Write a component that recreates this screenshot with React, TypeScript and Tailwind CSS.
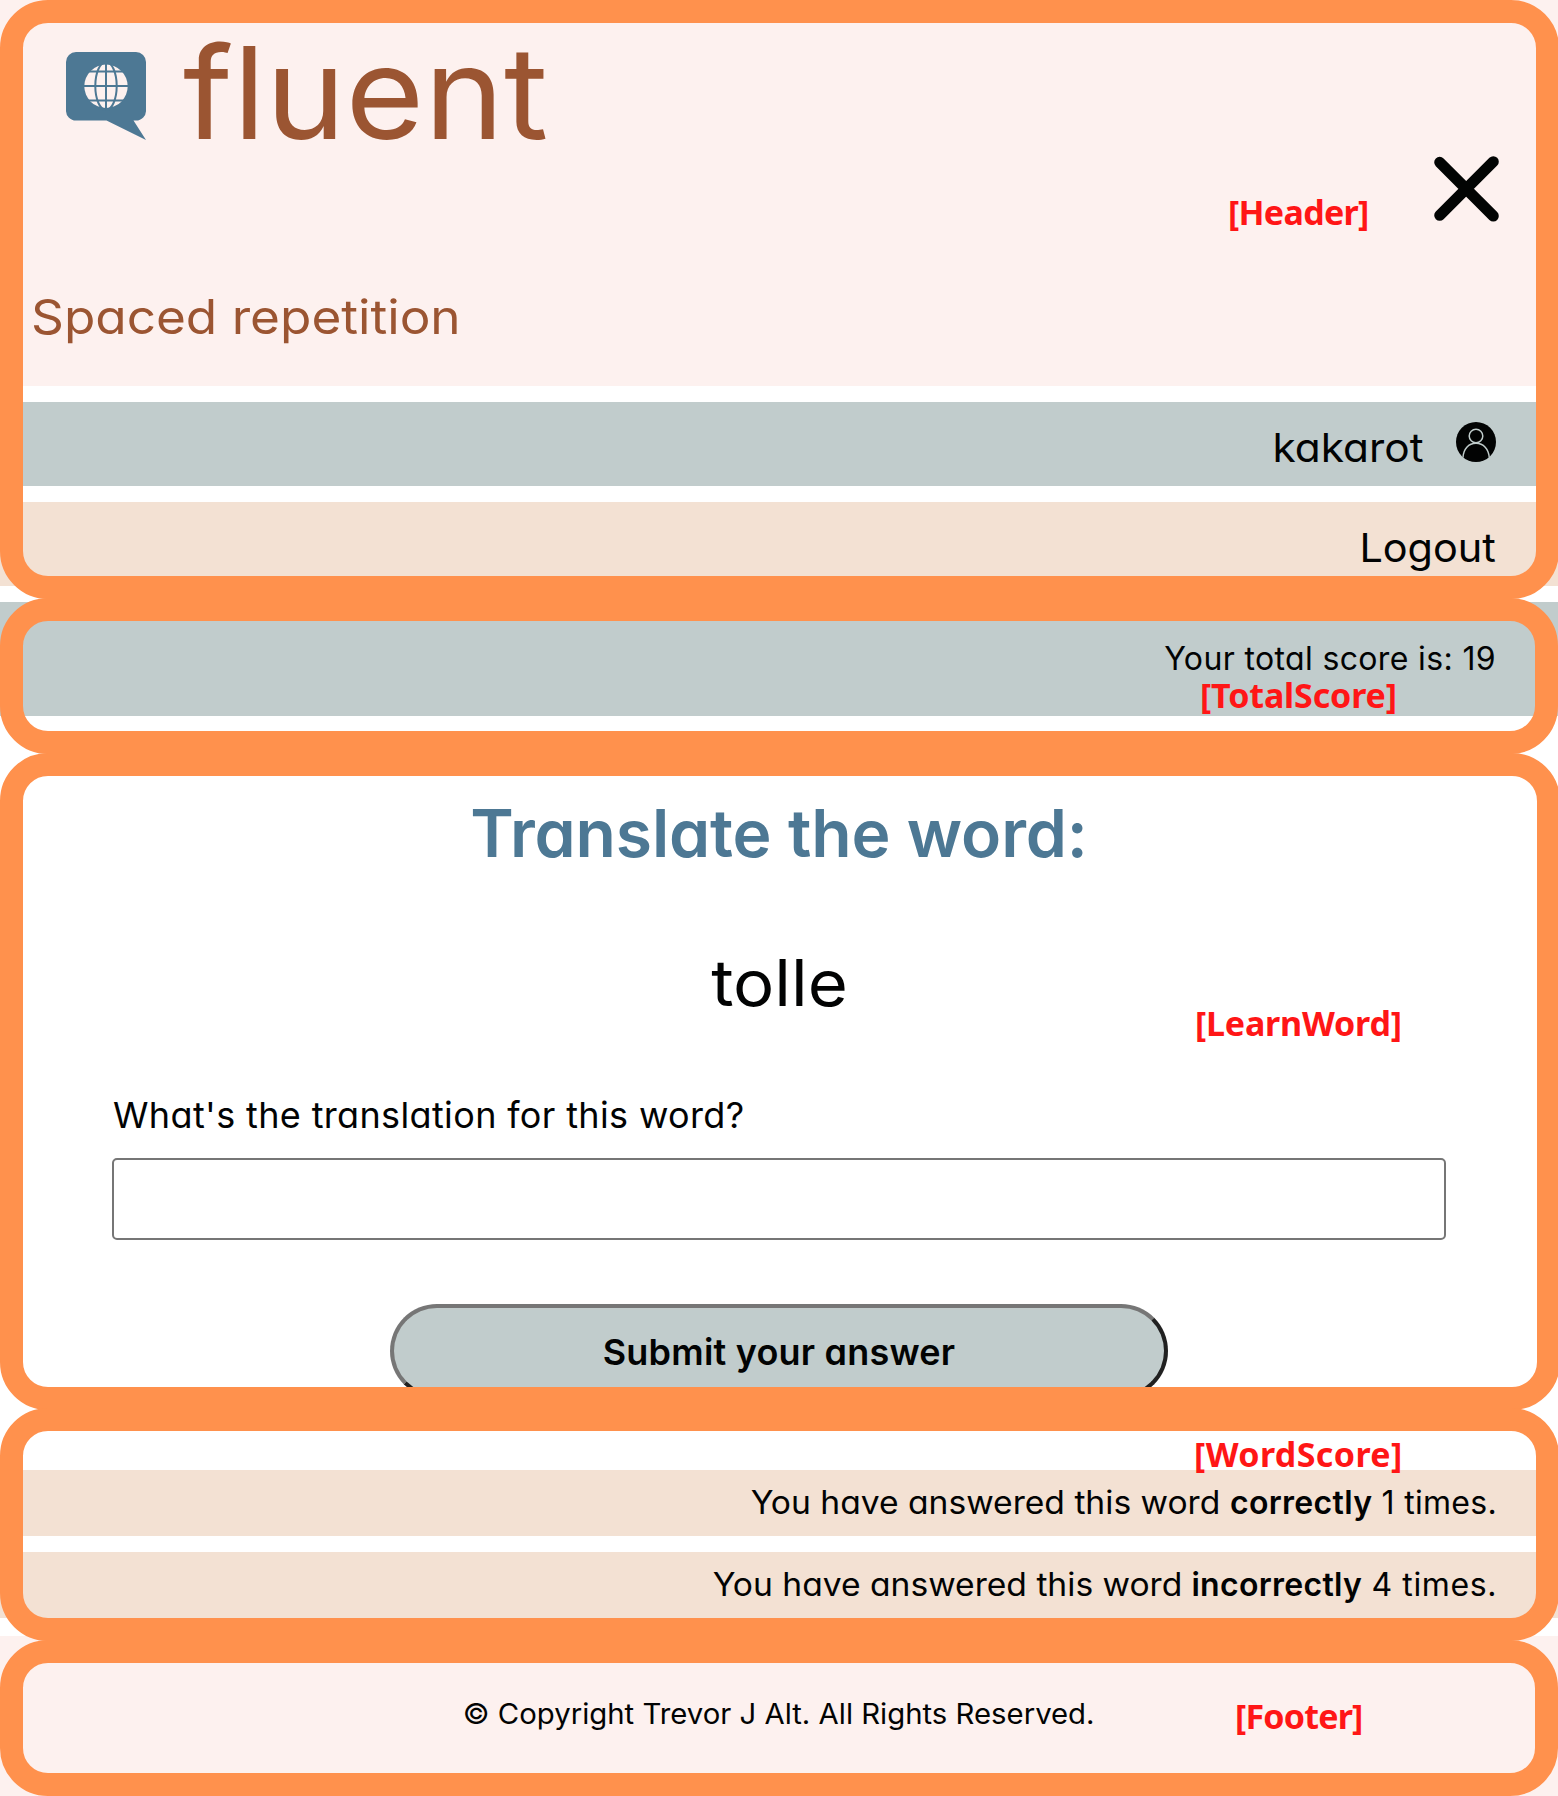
const labelBase =
  "absolute whitespace-nowrap font-['Noto_Sans',sans-serif] text-[34px] leading-[34px] font-bold text-[#ff1616]";

function Logo() {
  return (
    <svg width="80" height="88" viewBox="0 0 80 88" className="mt-[23px] shrink-0">
      <path
        d="M10 0H70A10 10 0 0 1 80 10V58A10 10 0 0 1 70 68.5H67.5L80 88L40.5 68.5H10A10 10 0 0 1 0 58V10A10 10 0 0 1 10 0Z"
        fill="#4d7894"
      />
      <circle cx="40" cy="34.3" r="21.7" fill="#fdf1ef" />
      <g fill="none" stroke="#4d7894" strokeWidth="2">
        <path d="M40 11V57M17 34H63M21 19.5H59M21 48.5H59" />
        <ellipse cx="40" cy="34" rx="10.7" ry="24" />
      </g>
    </svg>
  );
}

function CloseIcon() {
  return (
    <svg width="66" height="66" viewBox="0 0 66 66">
      <path d="M5.7 6.3L59.3 60M59.3 5.7L5.7 59.3" stroke="#020403" strokeWidth="11" strokeLinecap="round" />
    </svg>
  );
}

function Avatar() {
  return (
    <svg width="40" height="40" viewBox="0 0 40 40" className="mt-5 shrink-0">
      <circle cx="20" cy="20" r="20" fill="#020303" />
      <g fill="none" stroke="#c0cccb" strokeWidth="1.5">
        <circle cx="20" cy="14" r="6.8" />
        <path d="M7 35.5C7.4 27 12.5 21.3 20 21.3S32.6 27 33.3 35.5" />
      </g>
    </svg>
  );
}

function Header() {
  return (
    <header className="flex h-[386px] justify-between bg-[#fdf1ef] text-[#9b5532]">
      <div>
        <div className="flex pt-[29px] pl-[66px]">
          <Logo />
          <h1 className="ml-[37px] origin-left scale-x-[1.055] text-[128px] leading-[128px]">fluent</h1>
        </div>
        <h2 className="mt-[136px] ml-[31px] w-max origin-left scale-x-[1.068] text-[48px] leading-[48px]">
          Spaced repetition
        </h2>
      </div>
      <button aria-label="Close" className="mt-[156px] mr-[58px] self-start">
        <CloseIcon />
      </button>
    </header>
  );
}

function Frames() {
  return (
    <div className="pointer-events-none absolute inset-0 flex flex-col overflow-hidden">
      <div className="h-[599px] w-[1559px] shrink-0 rounded-[48px] border-[23px] border-[#ff914d]" />
      <div className="-mt-px h-[156px] w-[1558px] shrink-0 rounded-[48px] border-[23px] border-[#ff914d]" />
      <div className="-mt-px h-[657px] w-[1560px] shrink-0 rounded-[48px] border-[23px] border-[#ff914d]" />
      <div className="-mt-[2px] h-[233px] w-[1559px] shrink-0 rounded-[48px] border-[23px] border-[#ff914d]" />
      <div className="-mt-px h-[156px] w-[1558px] shrink-0 rounded-[48px] border-[23px] border-[#ff914d]" />
    </div>
  );
}

export default function App() {
  return (
    <div className="relative h-[1796px] w-[1558px] overflow-hidden bg-white font-['Inter',sans-serif] text-[#020303] [font-feature-settings:'cv11']">
      <Header />

      <div className="mt-4 flex h-[84px] justify-end bg-[#c1cccc] pr-[62px]">
        <span className="mr-[32px] origin-right scale-x-[1.06] pt-[25px] text-[40px] leading-[41px]">kakarot</span>
        <Avatar />
      </div>
      <div className="mt-4 flex h-[84px] justify-end bg-[#f3e1d3] pt-[25px] pr-[62px]">
        <span className="origin-right scale-x-[1.035] text-[40px] leading-[41px]">Logout</span>
      </div>
      <div className="mt-4 flex h-[114px] justify-end bg-[#c1cccc] pt-[41px] pr-[62px]">
        <p className="text-[32px] leading-[32px] tracking-[0.36px]">Your total score is: 19</p>
      </div>

      <main className="flex h-[754px] flex-col items-center pt-[84px]">
        <h2 className="text-[66px] leading-[66px] font-semibold tracking-[-0.15px] text-[#4d7894]">
          Translate the word:
        </h2>
        <p className="mt-[85px] scale-x-[1.075] text-[64px] leading-[64px]">tolle</p>
        <div className="mt-[82px] w-[1334px]">
          <label htmlFor="guess" className="block pl-[1px] text-[36px] leading-[36px] tracking-[0.36px]">
            What's the translation for this word?
          </label>
          <input
            id="guess"
            className="mt-[25px] block h-[82px] w-full rounded-[5px] border-2 border-[#767676] bg-white"
          />
        </div>
        <button className="mt-[64px] h-[94px] w-[778px] rounded-full border-4 border-t-[#767676] border-r-[#212121] border-b-[#212121] border-l-[#767676] bg-[#c1cccc] pt-[2px] text-[36px] leading-[36px] font-semibold tracking-[0.2px]">
          Submit your answer
        </button>
      </main>

      <div className="flex h-[66px] justify-end bg-[#f3e1d3] pt-[17px] pr-[61px]">
        <p className="text-[32px] leading-[32px] tracking-[0.3px]">
          <span className="inline-block origin-right scale-x-[1.05] tracking-normal">You have answered this word</span>{" "}
          <b className="font-semibold">correctly</b> 1 times.
        </p>
      </div>
      <div className="mt-4 flex h-[66px] justify-end bg-[#f3e1d3] pt-[17px] pr-[61px]">
        <p className="text-[32px] leading-[32px] tracking-[0.3px]">
          <span className="inline-block origin-right scale-x-[1.05] tracking-normal">You have answered this word</span>{" "}
          <b className="font-semibold">incorrectly</b> <span className="tracking-[0.6px]">4 times.</span>
        </p>
      </div>

      <footer className="mt-[18px] flex h-[160px] justify-center bg-[#fdf1ef] pt-[64px]">
        <p className="scale-x-[1.047] text-[28px] leading-[29px]">© Copyright Trevor J Alt. All Rights Reserved.</p>
      </footer>

      <Frames />
      <span className={`${labelBase} top-[195px] left-[1228px] tracking-[-0.7px]`}>[Header]</span>
      <span className={`${labelBase} top-[678px] left-[1200px] tracking-[-0.15px]`}>[TotalScore]</span>
      <span className={`${labelBase} top-[1006px] left-[1195px] tracking-[-0.2px]`}>[LearnWord]</span>
      <span className={`${labelBase} top-[1437px] left-[1194px] tracking-[0.4px]`}>[WordScore]</span>
      <span className={`${labelBase} top-[1699px] left-[1235px] tracking-[-0.8px]`}>[Footer]</span>
    </div>
  );
}
